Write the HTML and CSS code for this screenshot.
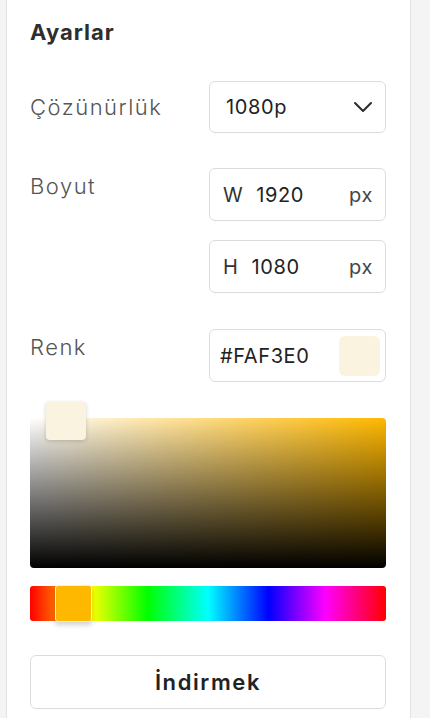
FILE: index.html
```html
<!DOCTYPE html>
<html lang="tr">
<head>
    <meta charset="UTF-8">
    <title>Ayarlar</title>
    <link rel="stylesheet" href="styles.css">
</head>
<body>
    <div class="panel">
        <h2 class="panel-title">Ayarlar</h2>

        <div class="row row-center">
            <label class="label">Çözünürlük</label>
            <div class="box select">
                <span class="value">1080p</span>
                <svg class="chevron" width="20" height="12" viewBox="0 0 20 12">
                    <path d="M2 2 L10 10 L18 2" fill="none" stroke="#2b2b2b" stroke-width="2" stroke-linecap="round" stroke-linejoin="round"/>
                </svg>
            </div>
        </div>

        <div class="row">
            <label class="label">Boyut</label>
            <div class="stack">
                <div class="box">
                    <span class="axis">W</span>
                    <span class="value num">1920</span>
                    <span class="unit">px</span>
                </div>
                <div class="box">
                    <span class="axis">H</span>
                    <span class="value num">1080</span>
                    <span class="unit">px</span>
                </div>
            </div>
        </div>

        <div class="row">
            <label class="label">Renk</label>
            <div class="box hex">
                <span class="value">#FAF3E0</span>
                <span class="swatch"></span>
            </div>
        </div>

        <div class="sv">
            <span class="sv-handle"></span>
        </div>

        <div class="hue">
            <span class="hue-handle"></span>
        </div>

        <button class="download" type="button">İndirmek</button>
    </div>
</body>
</html>
```

FILE: styles.css
```css
body {
    margin: 0;
    background: #f4f4f4;
    font-family: "Inter", "DejaVu Sans", sans-serif;
    color: #2a2a2a;
}

.panel {
    margin-left: 6px;
    width: 356px;
    min-height: 700px;
    padding: 19px 24px 9px 23px;
    background: #fff;
    border: 1px solid #e3e3e3;
    border-top: none;
}

.panel-title {
    margin: 0 0 36px 0;
    font-size: 22px;
    font-weight: 700;
    letter-spacing: 1px;
    color: #2e2e2e;
    line-height: 26px;
}

.row {
    display: grid;
    grid-template-columns: 179px 177px;
    margin-bottom: 36px;
}

.row:first-of-type {
    margin-bottom: 35px;
}

.row-center {
    align-items: center;
}

.label {
    font-size: 22px;
    font-weight: 300;
    letter-spacing: 1.5px;
    color: #555;
    line-height: 36px;
}

.stack {
    display: flex;
    flex-direction: column;
    gap: 19px;
}

.box {
    height: 53px;
    box-sizing: border-box;
    border: 1px solid #dcdcdc;
    border-radius: 6px;
    display: flex;
    align-items: center;
    padding: 0 12px 0 13px;
    font-size: 20px;
    letter-spacing: 0.6px;
    background: #fff;
}

.select {
    height: 52px;
    padding-left: 16px;
    justify-content: space-between;
}

.value {
    color: #222;
}

.axis {
    margin-right: 13px;
    color: #333;
}

.num {
    flex: 1;
}

.unit {
    color: #444;
}

.hex {
    padding: 0 5px 0 10px;
    justify-content: space-between;
}

.swatch {
    width: 41px;
    height: 40px;
    border-radius: 6px;
    background: #faf3e0;
}

.sv {
    position: relative;
    height: 150px;
    border-radius: 4px;
    background:
        linear-gradient(to top, #000, rgba(0, 0, 0, 0)),
        linear-gradient(to right, #fff, #ffb800);
}

.sv-handle {
    position: absolute;
    left: 16px;
    top: -16px;
    width: 40px;
    height: 38px;
    border-radius: 4px;
    background: #faf3e0;
    box-shadow: 0 1px 4px rgba(0, 0, 0, 0.18);
}

.hue {
    position: relative;
    height: 35px;
    margin-top: 18px;
    border-radius: 3px;
    background: linear-gradient(to right, #f00 0%, #ff0 17%, #0f0 33%, #0ff 50%, #00f 67%, #f0f 83%, #f00 100%);
}

.hue-handle {
    position: absolute;
    left: 25px;
    top: -1px;
    width: 37px;
    height: 37px;
    box-sizing: border-box;
    border: 1px solid #f5f0e0;
    border-radius: 3px;
    background: #ffb800;
    box-shadow: 0 3px 5px rgba(0, 0, 0, 0.18);
}

.download {
    display: block;
    width: 100%;
    height: 54px;
    margin-top: 34px;
    border: 1px solid #dcdcdc;
    border-radius: 6px;
    background: #fff;
    font-family: inherit;
    font-size: 22px;
    font-weight: 600;
    letter-spacing: 1.6px;
    color: #222;
}
```
